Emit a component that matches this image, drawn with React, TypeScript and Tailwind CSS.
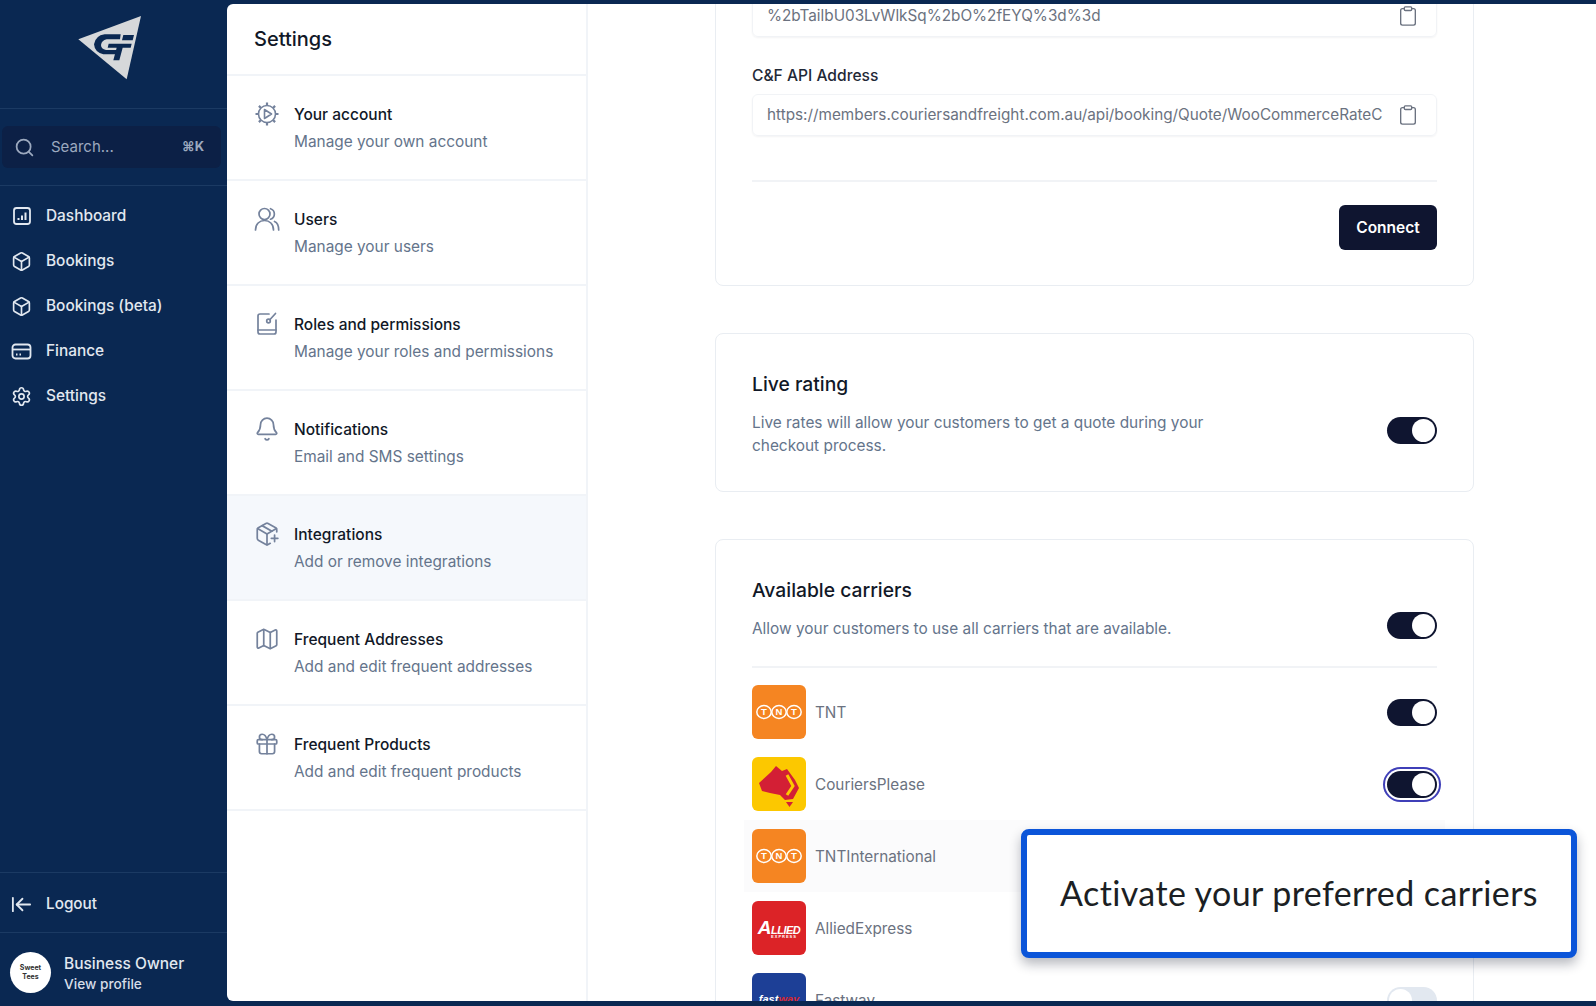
import React from "react";
import {
  Search,
  Box,
  Settings as SettingsIcon,
  ArrowLeftToLine,
  Bell,
  PackagePlus,
  Map as MapIcon,
  Gift,
  Clipboard,
} from "lucide-react";

function CFLogo() {
  return (
    <svg viewBox="0 0 240 228" className="w-[80px] h-[76px]">
      <polygon points="213,15 25,85 170,205 " fill="#d6d8da" />
      <path d="M152 70 H104 Q76 74 72 100 Q74 124 100 130 H138 L142 117 H108 Q93 114 93 102 Q95 88 110 85 H150 Z" fill="#0a2852" />
      <path d="M116 98 H185 L182 110 H158 L148 148 H130 L140 110 H113 Z" fill="#0a2852" />
      <path d="M160 72 H192 L188 88 H156 Z" fill="#0a2852" />
    </svg>
  );
}

function DashIcon() {
  return (
    <svg viewBox="0 0 20 20" className="w-[20px] h-[20px]" fill="none" stroke="currentColor" strokeWidth="1.8">
      <rect x="2" y="2" width="16" height="16" rx="2.5" />
      <path d="M6.5 14v-2M10 14V9.5M13.5 14V6.5" strokeWidth="2" />
    </svg>
  );
}

function FinanceIcon() {
  return (
    <svg viewBox="0 0 21 21" className="w-[21px] h-[21px]" fill="none" stroke="currentColor" strokeWidth="1.8">
      <rect x="1.5" y="3.5" width="18" height="14" rx="3" />
      <path d="M1.5 8.5h18" />
      <path d="M5 13.5h1.5M8.5 13.5h1.5" strokeWidth="2" />
    </svg>
  );
}

function AccountIcon() {
  return (
    <svg viewBox="0 0 26 26" className="w-[26px] h-[26px]" fill="none" stroke="#74829c" strokeWidth="1.6">
      <circle cx="13" cy="13" r="8.5" />
      <path d="M10.5 8.5 L17.5 13 L10.5 17.5 Z" strokeLinejoin="round" />
      <path
        d="M13 1.5v3M13 21.5v3M1.5 13h3M21.5 13h3M4.9 4.9l2.1 2.1M19 19l2.1 2.1M4.9 21.1 7 19M19 7l2.1-2.1"
        strokeWidth="2.2"
      />
    </svg>
  );
}

function UsersIcon() {
  return (
    <svg viewBox="0 0 26 26" className="w-[26px] h-[26px]" fill="none" stroke="#74829c" strokeWidth="1.7" strokeLinecap="round">
      <circle cx="10.5" cy="8" r="5.5" />
      <path d="M1.5 24c0-6 4-9.5 9-9.5s9 3.5 9 9.5" />
      <path d="M16.5 2.7a5.5 5.5 0 0 1 0 10.5" />
      <path d="M20.5 15.5c2.8 1.2 4.2 4.2 4.2 8.5" />
    </svg>
  );
}

function RolesIcon() {
  return (
    <svg viewBox="0 0 26 26" className="w-[26px] h-[26px]" fill="none" stroke="#74829c" strokeWidth="1.7" strokeLinecap="round" strokeLinejoin="round">
      <path d="M15 3H6a2 2 0 0 0-2 2v16a2 2 0 0 0 2 2h14a2 2 0 0 0 2-2V9" />
      <path d="M4 19h18" />
      <circle cx="14.5" cy="10" r="1.8" />
      <path d="M16 8.5 21.5 2.5" />
    </svg>
  );
}

function Toggle({ on = true, focus = false }: { on?: boolean; focus?: boolean }) {
  return (
    <div
      className={`w-[50px] h-[27px] rounded-full shrink-0 flex items-center px-[2px] ${
        on ? "bg-[#0f1530] justify-end" : "bg-[#e2e8f0] justify-start"
      } ${focus ? "ring-2 ring-[#3f3fb8] ring-offset-2" : ""}`}
    >
      <div className="w-[23px] h-[23px] rounded-full bg-white" />
    </div>
  );
}

function TntLogo() {
  return (
    <div className="w-[54px] h-[54px] rounded-md bg-[#f58522] flex items-center justify-center">
      <svg viewBox="0 0 46 16" className="w-[46px] h-[16px]">
        {[
          [8, "T"],
          [23, "N"],
          [38, "T"],
        ].map(([cx, l]) => (
          <g key={cx as number}>
            <ellipse cx={cx as number} cy="8" rx="7.2" ry="6.4" fill="none" stroke="#fff" strokeWidth="1.5" />
            <text x={cx as number} y="11.3" textAnchor="middle" fontSize="9.5" fontWeight="700" fill="#fff" fontFamily="Liberation Sans, sans-serif">
              {l as string}
            </text>
          </g>
        ))}
      </svg>
    </div>
  );
}

function CpLogo() {
  return (
    <div className="w-[54px] h-[54px] rounded-md bg-[#fcc800]">
      <svg viewBox="0 0 54 54" className="w-[54px] h-[54px]">
        <path d="M7 26 L19 15 L24 9 L30 14 L35 12 L43 23 L47 31 L41 42 L33 43 L28 38 L18 36 L10 34 Z" fill="#d31f35" />
        <path d="M35 18 L41 29 L35 38" fill="none" stroke="#fcc800" strokeWidth="3" />
        <polygon points="34,45 41,45 37.5,50" fill="#d31f35" />
      </svg>
    </div>
  );
}

function AlliedLogo() {
  return (
    <div className="w-[54px] h-[54px] rounded-md bg-[#dc2327] flex flex-col items-center justify-center">
      <span className="text-white text-[11px] font-black italic leading-none tracking-[-0.5px] font-['Liberation_Sans',sans-serif]">
        <span className="text-[19px]">A</span>LLIED
      </span>
      <span className="-mt-[2px] pl-[10px] text-white text-[4px] font-bold leading-none tracking-[1px] font-['Liberation_Sans',sans-serif]">
        EXPRESS
      </span>
    </div>
  );
}

function FastwayLogo() {
  return (
    <div className="w-[54px] h-[54px] rounded-md bg-[#1d3f96] flex items-start justify-center pt-[21px]">
      <span className="text-[11px] font-bold italic leading-none font-['Liberation_Sans',sans-serif] text-white">
        fast<span className="text-[#d9262c]">way</span>
      </span>
    </div>
  );
}

const nav = [
  { label: "Dashboard", icon: <DashIcon /> },
  { label: "Bookings", icon: <Box size={21} strokeWidth={1.9} /> },
  { label: "Bookings (beta)", icon: <Box size={21} strokeWidth={1.9} /> },
  { label: "Finance", icon: <FinanceIcon /> },
  { label: "Settings", icon: <SettingsIcon size={21} strokeWidth={1.9} /> },
];

const settings = [
  { t: "Your account", s: "Manage your own account", i: <AccountIcon /> },
  { t: "Users", s: "Manage your users", i: <UsersIcon /> },
  { t: "Roles and permissions", s: "Manage your roles and permissions", i: <RolesIcon /> },
  { t: "Notifications", s: "Email and SMS settings", i: <Bell size={26} strokeWidth={1.6} color="#74829c" /> },
  { t: "Integrations", s: "Add or remove integrations", i: <PackagePlus size={26} strokeWidth={1.6} color="#74829c" />, active: true },
  { t: "Frequent Addresses", s: "Add and edit frequent addresses", i: <MapIcon size={26} strokeWidth={1.6} color="#74829c" /> },
  { t: "Frequent Products", s: "Add and edit frequent products", i: <Gift size={26} strokeWidth={1.6} color="#74829c" /> },
];

const carriers = [
  { n: "TNT", l: <TntLogo />, on: true },
  { n: "CouriersPlease", l: <CpLogo />, on: true, focus: true },
  { n: "TNTInternational", l: <TntLogo />, hover: true, on: true },
  { n: "AlliedExpress", l: <AlliedLogo />, on: true },
  { n: "Fastway", l: <FastwayLogo />, on: false },
];

function Field({ value }: { value: string }) {
  return (
    <div className="h-[42px] rounded-md border border-[#f1f3f6] shadow-[0_1px_2px_rgba(15,23,42,0.05)] flex items-center pl-[14px] pr-[17px] gap-3">
      <span className="flex-1 min-w-0 whitespace-nowrap text-[15.3px] text-[#6b7280]">{value}</span>
      <Clipboard size={22} strokeWidth={1.5} color="#6b7280" className="shrink-0" />
    </div>
  );
}

export default function App() {
  return (
    <div className="relative h-screen w-full overflow-hidden bg-[#0a2852] pt-[4px] pb-[5px] flex font-['Inter',sans-serif]">
      <aside className="w-[227px] shrink-0 flex flex-col text-[#e2e8f0]">
        <div className="h-[105px] border-b border-[#1b3a63] flex items-start pl-[70px] pt-[7px]">
          <CFLogo />
        </div>
        <div className="h-[77px] border-b border-[#1b3a63] flex items-center pl-[2px] pr-[6px]">
          <div className="w-full h-[42px] rounded-md bg-[#0c2046] flex items-center pl-[12px] pr-[17px] text-[#9ca9bf]">
            <Search size={21} strokeWidth={2} />
            <span className="ml-[16px] text-[15px] flex-1">Search...</span>
            <span className="text-[13px] font-bold">⌘K</span>
          </div>
        </div>
        <nav className="pt-[7.5px] flex flex-col">
          {nav.map((n) => (
            <div key={n.label} className="h-[45px] flex items-center pl-[11px]">
              <span className="w-[21px] flex justify-center">{n.icon}</span>
              <span className="ml-[14px] text-[15.4px] font-medium">{n.label}</span>
            </div>
          ))}
        </nav>
        <div className="mt-auto h-[61px] border-t border-b border-[#1b3a63] flex items-center pl-[10px] pt-[3px]">
          <ArrowLeftToLine size={23} strokeWidth={1.9} />
          <span className="ml-[13px] text-[15.3px] font-medium">Logout</span>
        </div>
        <div className="h-[68px] flex items-center pl-[10px] pt-[10px]">
          <div className="w-[41px] h-[41px] rounded-full bg-white flex items-center justify-center text-center text-[7px] font-bold leading-[9px] text-[#333]">
            Sweet
            <br />
            Tees
          </div>
          <div className="ml-[13px] pt-[3px]">
            <div className="text-[15.5px] font-medium leading-[20px]">Business Owner</div>
            <div className="text-[13.7px] font-medium leading-[20px] text-[#d6dde8]">View profile</div>
          </div>
        </div>
      </aside>

      <main className="flex-1 min-w-0 bg-white rounded-l-md flex overflow-hidden">
        <section className="w-[361px] shrink-0 border-r-2 border-[#f1f4f8] flex flex-col">
          <div className="h-[72px] border-b-2 border-[#f1f4f8] flex items-center pl-[27px] text-[20px] font-medium text-[#111827]">
            Settings
          </div>
          {settings.map((r) => (
            <div
              key={r.t}
              className={`h-[105px] shrink-0 border-b-2 border-[#f1f4f8] flex pl-[27px] pt-[25px] ${r.active ? "bg-[#f5f8fc]" : ""}`}
            >
              <span className="w-[26px] h-[26px] shrink-0">{r.i}</span>
              <div className="ml-[14px] pt-[4px]">
                <div className="text-[15.5px] font-medium leading-[20px] text-[#111827]">{r.t}</div>
                <div className="mt-[7px] text-[15.4px] leading-[20px] text-[#64748b]">{r.s}</div>
              </div>
            </div>
          ))}
        </section>

        <section className="flex-1 min-w-0 overflow-hidden">
          <div className="ml-[127px] w-[759px] -mt-[40px] flex flex-col gap-[47px]">
            <div className="rounded-lg border border-[#e9edf2] px-[36px] pt-[30px] pb-[35px]">
              <Field value="%2bTailbU03LvWlkSq%2bO%2fEYQ%3d%3d" />
              <div className="mt-[29px] mb-[8px] text-[15.6px] font-medium leading-[20px] text-[#1f2937]">C&amp;F API Address</div>
              <Field value="https://members.couriersandfreight.com.au/api/booking/Quote/WooCommerceRateC" />
              <div className="mt-[44px] border-t-2 border-[#f1f3f6]" />
              <div className="mt-[23px] flex justify-end">
                <div className="w-[98px] h-[45px] rounded-md bg-[#0f1530] text-white text-[15.5px] font-semibold flex items-center justify-center">
                  Connect
                </div>
              </div>
            </div>

            <div className="rounded-lg border border-[#e9edf2] px-[36px] pt-[36px] h-[159px]">
              <div className="text-[19.3px] font-medium leading-[28px] text-[#111827]">Live rating</div>
              <div className="mt-[13px] flex items-center justify-between">
                <p className="w-[480px] text-[15.4px] leading-[23px] text-[#64748b]">
                  Live rates will allow your customers to get a quote during your checkout process.
                </p>
                <div className="-mt-[8px]">
                  <Toggle />
                </div>
              </div>
            </div>

            <div className="rounded-t-lg border border-[#e9edf2] px-[36px] pt-[36px] h-[520px]">
              <div className="text-[19.3px] font-medium leading-[28px] text-[#111827]">Available carriers</div>
              <div className="mt-[13px] flex items-center justify-between">
                <p className="text-[15.4px] leading-[23px] text-[#64748b]">Allow your customers to use all carriers that are available.</p>
                <div className="-mt-[6px]">
                  <Toggle />
                </div>
              </div>
              <div className="mt-[26px] border-t-2 border-[#f1f3f6]" />
              <div className="mt-[8px] -mx-[8px]">
                {carriers.map((c) => (
                  <div key={c.n} className={`h-[72px] flex items-center px-[8px] ${c.hover ? "bg-[#fbfbfc]" : ""}`}>
                    {c.l}
                    <span className="ml-[9px] pt-[2px] flex-1 text-[15.3px] text-[#6b7280]">{c.n}</span>
                    <Toggle on={c.on} focus={c.focus} />
                  </div>
                ))}
              </div>
            </div>
          </div>
        </section>
      </main>

      <div className="absolute right-[19px] bottom-[48px] w-[556px] h-[129px] rounded-lg bg-white border-[6px] border-[#0b55d9] shadow-[0_6px_12px_rgba(15,23,42,0.3)] flex items-center justify-center pb-[2px] text-[34px] tracking-[0.4px] text-[#1c1f24] font-['Lato',sans-serif]">
        Activate your preferred carriers
      </div>
    </div>
  );
}
